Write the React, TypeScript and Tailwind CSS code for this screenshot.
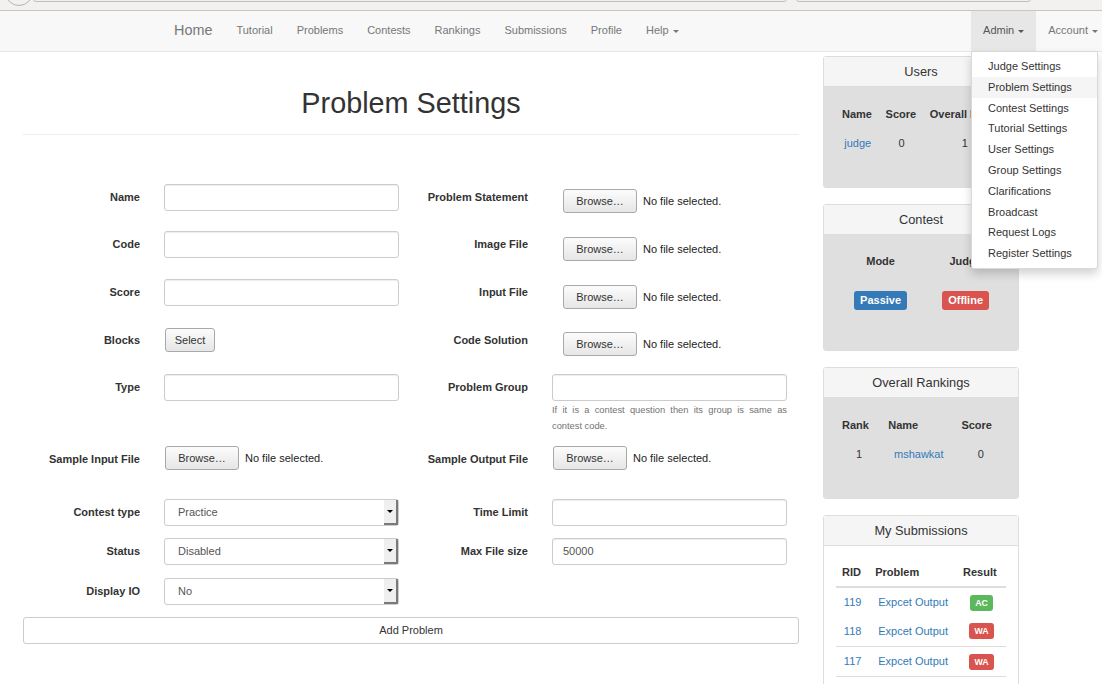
import React from 'react';

const navLinks = ['Tutorial', 'Problems', 'Contests', 'Rankings', 'Submissions', 'Profile'];

const adminItems = [
  'Judge Settings',
  'Problem Settings',
  'Contest Settings',
  'Tutorial Settings',
  'User Settings',
  'Group Settings',
  'Clarifications',
  'Broadcast',
  'Request Logs',
  'Register Settings',
];

function Caret() {
  return (
    <span className="ml-[4px] inline-block h-0 w-0 border-x-[3px] border-t-[3px] border-x-transparent border-t-current align-middle" />
  );
}

function Label({ children }: { children: React.ReactNode }) {
  return (
    <div className="w-[129px] shrink-0 pr-[12px] pt-[7px] text-right text-[11px] font-bold leading-[13px] text-[#333]">
      {children}
    </div>
  );
}

function TextInput({ value }: { value?: string }) {
  return (
    <div className="flex h-[27px] w-[235px] items-center rounded-[3px] border border-[#ccc] bg-white pl-[10px] text-[11px] text-[#555] shadow-[inset_0_1px_1px_rgba(0,0,0,0.075)]">
      {value}
    </div>
  );
}

function FileInput({ className = '' }: { className?: string }) {
  return (
    <div className={`flex items-center ${className}`}>
      <button className="h-[24px] w-[74px] rounded-[3px] border border-[#a9a9a9] bg-gradient-to-b from-[#fcfcfc] to-[#e6e6e6] text-[11px] text-[#333]">
        Browse…
      </button>
      <span className="ml-[6px] text-[11px] text-[#222]">No file selected.</span>
    </div>
  );
}

function Select({ value }: { value: string }) {
  return (
    <div className="flex h-[27px] w-[235px] items-stretch rounded-[3px] border border-[#ccc] bg-white">
      <div className="flex flex-1 items-center pl-[13px] text-[11px] text-[#555]">{value}</div>
      <div className="flex w-[14px] items-center justify-center border-r-2 border-b-2 border-r-[#7a7a7a] border-b-[#7a7a7a] bg-[#efefef]">
        <span className="h-0 w-0 border-x-[3px] border-t-[3px] border-x-transparent border-t-black" />
      </div>
    </div>
  );
}

function Half({ label, children }: { label?: string; children?: React.ReactNode }) {
  return (
    <div className="flex w-[388px]">
      <Label>{label}</Label>
      <div className="w-[259px] px-[12px]">{children}</div>
    </div>
  );
}

function Panel({ title, children, grey = true, bodyClass = '' }: { title: string; children: React.ReactNode; grey?: boolean; bodyClass?: string }) {
  return (
    <div className="rounded-[3px] border border-[#ddd]">
      <div className="h-[30px] border-b border-[#ddd] bg-[#f5f5f5] text-center text-[12.8px] leading-[29px] text-[#333]">
        {title}
      </div>
      <div className={`${grey ? 'bg-[#dfdfdf]' : 'bg-white'} px-[12px] pt-[13px] ${bodyClass}`}>{children}</div>
    </div>
  );
}

function Badge({ color, children, small = false }: { color: string; children: React.ReactNode; small?: boolean }) {
  return (
    <span
      className={`inline-block rounded-[3px] font-bold text-white ${color} ${
        small ? 'h-[16px] px-[5px] text-[8.8px] leading-[16px]' : 'h-[19px] px-[6px] text-[11px] leading-[19px]'
      }`}
    >
      {children}
    </span>
  );
}

export default function App() {
  return (
    <div className="relative h-[684px] w-full overflow-hidden bg-white font-['Liberation_Sans',Arial,sans-serif] text-[#333]">
      {/* browser strip */}
      <div className="flex h-[11px] overflow-hidden border-b border-[#c6c6c6] bg-[#f2f1f0]">
        <div className="ml-[5px] mt-[-22px] h-[28px] w-[28px] shrink-0 rounded-full border border-[#b5b5b5]" />
        <div className="mt-[-20px] h-[22px] w-[754px] rounded-[3px] border border-[#bfbfbf]" />
        <div className="ml-[9px] mt-[-20px] h-[22px] w-[235px] rounded-[3px] border border-[#bfbfbf]" />
      </div>

      {/* navbar */}
      <div className="flex h-[41px] border-b border-[#e7e7e7] bg-[#f8f8f8] pl-[162px] text-[#777]">
        <div className="px-[12px] text-[14.4px] leading-[39px]">Home</div>
        {navLinks.map((l) => (
          <div key={l} className="px-[12px] text-[11px] leading-[39px]">
            {l}
          </div>
        ))}
        <div className="px-[12px] text-[11px] leading-[39px]">
          Help
          <Caret />
        </div>
        <div className="ml-auto mr-[-8px] flex">
          <div className="relative h-[40px] bg-[#e7e7e7] px-[12px] text-[11px] leading-[39px] text-[#555]">
            Admin
            <Caret />
            <div className="absolute left-0 top-[40px] z-10 w-[127px] rounded-b-[3px] border border-[rgba(0,0,0,0.15)] bg-white py-[4px] shadow-[0_5px_10px_rgba(0,0,0,0.175)]">
              {adminItems.map((item) => (
                <div
                  key={item}
                  className={`h-[20.8px] pl-[16px] text-[11px] leading-[20.8px] text-[#333] ${
                    item === 'Problem Settings' ? 'bg-[#f5f5f5]' : ''
                  }`}
                >
                  {item}
                </div>
              ))}
            </div>
          </div>
          <div className="px-[12px] text-[11px] leading-[39px]">
            Account
            <Caret />
          </div>
        </div>
      </div>

      <div className="flex gap-[24px] pl-[23px]">
        {/* main form column */}
        <div className="w-[776px]">
          <h1 className="mt-[35px] border-b border-[#eee] pb-[15px] text-center text-[28.8px] leading-[32px] text-[#333]">
            Problem Settings
          </h1>

          <div className="mt-[49px]">
            <div className="flex h-[47px]">
              <Half label="Name">
                <TextInput />
              </Half>
              <Half label="Problem Statement">
                <FileInput className="ml-[11px] mt-[5px]" />
              </Half>
            </div>
            <div className="flex h-[48px]">
              <Half label="Code">
                <TextInput />
              </Half>
              <Half label="Image File">
                <FileInput className="ml-[11px] mt-[6px]" />
              </Half>
            </div>
            <div className="flex h-[48px]">
              <Half label="Score">
                <TextInput />
              </Half>
              <Half label="Input File">
                <FileInput className="ml-[11px] mt-[6px]" />
              </Half>
            </div>
            <div className="flex h-[47px]">
              <Half label="Blocks">
                <button className="ml-[1px] mt-[1px] h-[24px] w-[50px] rounded-[3px] border border-[#a9a9a9] bg-gradient-to-b from-[#fcfcfc] to-[#e6e6e6] text-[11px] text-[#333]">
                  Select
                </button>
              </Half>
              <Half label="Code Solution">
                <FileInput className="ml-[11px] mt-[5px]" />
              </Half>
            </div>
            <div className="flex h-[72px]">
              <Half label="Type">
                <TextInput />
              </Half>
              <Half label="Problem Group">
                <TextInput />
                <p className="mt-[1px] text-justify text-[9.3px] leading-[16px] text-[#737373]">
                  If it is a contest question then its group is same as contest code.
                </p>
              </Half>
            </div>
            <div className="flex h-[53px]">
              <Half label="Sample Input File">
                <FileInput className="ml-[1px]" />
              </Half>
              <Half label="Sample Output File">
                <FileInput className="ml-[1px]" />
              </Half>
            </div>
            <div className="flex h-[39px]">
              <Half label="Contest type">
                <Select value="Practice" />
              </Half>
              <Half label="Time Limit">
                <TextInput />
              </Half>
            </div>
            <div className="flex h-[40px]">
              <Half label="Status">
                <Select value="Disabled" />
              </Half>
              <Half label="Max File size">
                <TextInput value="50000" />
              </Half>
            </div>
            <div className="flex h-[39px]">
              <Half label="Display IO">
                <Select value="No" />
              </Half>
              <Half />
            </div>
            <button className="h-[27px] w-full rounded-[3px] border border-[#ccc] bg-white text-[11px] text-[#333]">
              Add Problem
            </button>
          </div>
        </div>

        {/* sidebar */}
        <div className="mt-[4px] flex w-[196px] flex-col gap-[16px]">
          <Panel title="Users" bodyClass="h-[100px]">
            <table className="w-full text-[11px]">
              <thead>
                <tr className="h-[29px]">
                  <th className="px-[6px] text-left font-bold">Name</th>
                  <th className="px-[6px] text-left font-bold">Score</th>
                  <th className="whitespace-nowrap px-[6px] text-left font-bold">Overall Rank</th>
                </tr>
              </thead>
              <tbody>
                <tr className="h-[29px]">
                  <td className="px-[6px] text-center text-[#337ab7]">judge</td>
                  <td className="px-[6px] text-center">0</td>
                  <td className="px-[6px] text-center">1</td>
                </tr>
              </tbody>
            </table>
          </Panel>

          <Panel title="Contest" bodyClass="h-[115px]">
            <table className="w-full text-[11px]">
              <thead>
                <tr className="h-[27px]">
                  <th className="px-[6px] text-center font-bold">Mode</th>
                  <th className="px-[6px] text-center font-bold">Judge</th>
                </tr>
              </thead>
              <tbody>
                <tr className="h-[50px]">
                  <td className="px-[6px] text-center">
                    <Badge color="bg-[#337ab7]">Passive</Badge>
                  </td>
                  <td className="px-[6px] text-center">
                    <Badge color="bg-[#d9534f]">Offline</Badge>
                  </td>
                </tr>
              </tbody>
            </table>
          </Panel>

          <Panel title="Overall Rankings" bodyClass="h-[100px]">
            <table className="w-full text-[11px]">
              <thead>
                <tr className="h-[29px]">
                  <th className="px-[6px] text-left font-bold">Rank</th>
                  <th className="px-[6px] text-left font-bold">Name</th>
                  <th className="px-[6px] text-left font-bold">Score</th>
                </tr>
              </thead>
              <tbody>
                <tr className="h-[29px]">
                  <td className="px-[6px] text-center">1</td>
                  <td className="px-[6px] text-center text-[#337ab7]">mshawkat</td>
                  <td className="px-[6px] text-center">0</td>
                </tr>
              </tbody>
            </table>
          </Panel>

          <Panel title="My Submissions" grey={false} bodyClass="h-[200px]">
            <table className="w-full text-[11px]">
              <thead>
                <tr className="h-[28px] border-b-2 border-[#ddd]">
                  <th className="px-[6px] text-left font-bold">RID</th>
                  <th className="px-[6px] text-left font-bold">Problem</th>
                  <th className="px-[6px] text-left font-bold">Result</th>
                </tr>
              </thead>
              <tbody>
                <tr className="h-[29px]">
                  <td className="px-[6px] text-center text-[#337ab7]">119</td>
                  <td className="px-[6px] text-center text-[#337ab7]">Expcet Output</td>
                  <td className="px-[6px] text-center">
                    <Badge small color="bg-[#5cb85c]">AC</Badge>
                  </td>
                </tr>
                <tr className="h-[30px] border-b border-[#ddd]">
                  <td className="px-[6px] text-center text-[#337ab7]">118</td>
                  <td className="px-[6px] text-center text-[#337ab7]">Expcet Output</td>
                  <td className="px-[6px] text-center">
                    <Badge small color="bg-[#d9534f]">WA</Badge>
                  </td>
                </tr>
                <tr className="h-[30px] border-b border-[#ddd]">
                  <td className="px-[6px] text-center text-[#337ab7]">117</td>
                  <td className="px-[6px] text-center text-[#337ab7]">Expcet Output</td>
                  <td className="px-[6px] text-center">
                    <Badge small color="bg-[#d9534f]">WA</Badge>
                  </td>
                </tr>
              </tbody>
            </table>
          </Panel>
        </div>
      </div>
    </div>
  );
}
